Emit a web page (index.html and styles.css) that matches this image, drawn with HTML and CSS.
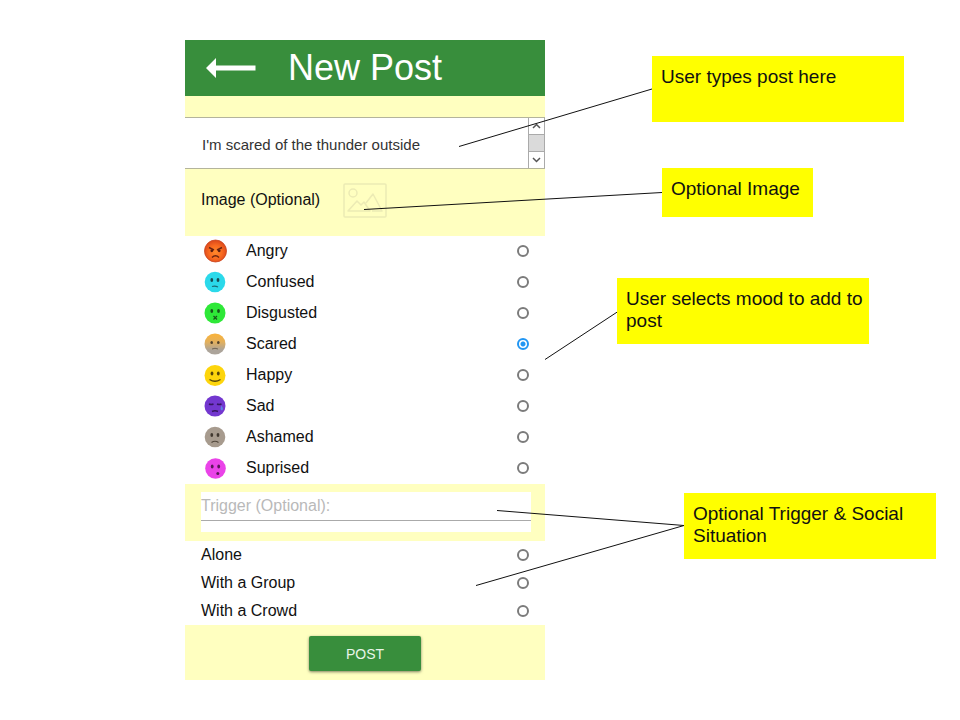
FILE: index.html
```html
<!DOCTYPE html>
<html lang="en">
<head>
<meta charset="utf-8">
<meta name="viewport" content="width=device-width, initial-scale=1">
<title>New Post</title>
<link rel="stylesheet" href="styles.css">
</head>
<body>
<main class="board">
  <form class="phone">
    <header class="topbar">
      <button class="back" type="button" aria-label="Back">
        <svg width="50" height="22" viewBox="0 0 50 22"><path d="M0 11 10 1V8.500H49.500V13.500H10V21Z" fill="#fff"/></svg>
      </button>
      <h1 class="title">New Post</h1>
    </header>

    <div class="message">
      <textarea class="message-text" rows="1" aria-label="Post text">I'm scared of the thunder outside</textarea>
      <div class="scroller">
        <button class="scroll-step" type="button" aria-label="Scroll up"><svg width="9" height="6" viewBox="0 0 9 6"><path d="M1 5 4.500 1.500 8 5"/></svg></button>
        <div class="scroll-thumb"></div>
        <button class="scroll-step" type="button" aria-label="Scroll down"><svg width="9" height="6" viewBox="0 0 9 6"><path d="M1 1 4.500 4.500 8 1"/></svg></button>
      </div>
    </div>

    <div class="image-row">
      <span>Image (Optional)</span>
      <button class="image-pick" type="button" aria-label="Add image">
        <svg width="44" height="35" viewBox="0 0 44 35" fill="none" stroke="#ecebb4" stroke-width="1.500" stroke-linejoin="round"><rect x="1" y="1" width="42" height="33" rx="1"/><circle cx="10" cy="10" r="4"/><path d="M5 28 14 18 18 22 21 19 27 28ZM23 20 30 11 39 28H29"/></svg>
      </button>
    </div>

    <fieldset class="moods" aria-label="Mood">
      <label class="mood">
        <svg class="face" viewBox="0 0 24 24"><defs><radialGradient id="angry" cx=".5" cy=".55" r=".5"><stop offset="0" stop-color="#ff8a2b"/><stop offset=".6" stop-color="#f96a20"/><stop offset="1" stop-color="#e04e1c"/></radialGradient></defs><circle cx="12.500" cy="12" r="11" fill="url(#angry)" stroke="#c9441f" stroke-width=".8"/><path d="M6 8.500 11 11M19 8.500 14 11M9 18.500Q12.500 15 16 18.500" stroke="#6b2410" stroke-width="1.500" fill="none"/><circle cx="8.800" cy="11.800" r="1.400" fill="#5a1e10"/><circle cx="16.200" cy="11.800" r="1.400" fill="#5a1e10"/></svg>
        <span class="mood-name">Angry</span><input class="radio" type="radio" name="mood">
      </label>
      <label class="mood">
        <svg class="face" viewBox="0 0 24 24"><circle cx="12" cy="12" r="10.300" fill="#2bd9ea"/><ellipse cx="8.800" cy="10" rx="1.400" ry="1.900" fill="#174a52"/><ellipse cx="15" cy="10" rx="1.400" ry="1.900" fill="#174a52"/><path d="M9 16.500Q12 15.500 15 17" stroke="#1c6973" stroke-width="1.200" fill="none"/></svg>
        <span class="mood-name">Confused</span><input class="radio" type="radio" name="mood">
      </label>
      <label class="mood">
        <svg class="face" viewBox="0 0 24 24"><circle cx="12" cy="12" r="10.500" fill="#2ee838"/><ellipse cx="8.800" cy="10" rx="1.400" ry="1.900" fill="#17561a"/><ellipse cx="15.500" cy="10" rx="1.400" ry="1.900" fill="#17561a"/><path d="M10.500 15 14 18.500M14 15 10.500 18.500" stroke="#17561a" stroke-width="1.200"/></svg>
        <span class="mood-name">Disgusted</span><input class="radio" type="radio" name="mood">
      </label>
      <label class="mood">
        <svg class="face" viewBox="0 0 24 24"><defs><linearGradient id="scared" x2="0" y2="1"><stop offset=".1" stop-color="#f6b23f"/><stop offset=".4" stop-color="#e3b05c"/><stop offset=".8" stop-color="#aca49a"/></linearGradient></defs><circle cx="12" cy="12" r="10.500" fill="url(#scared)"/><ellipse cx="8.700" cy="10.500" rx="1.300" ry="1.500" fill="#51422c"/><ellipse cx="15.300" cy="10.500" rx="1.300" ry="1.500" fill="#51422c"/><path d="M9 17Q12 15.500 15 17" stroke="#706555" fill="none"/></svg>
        <span class="mood-name">Scared</span><input class="radio" type="radio" name="mood" checked>
      </label>
      <label class="mood">
        <svg class="face" viewBox="0 0 24 24"><circle cx="12" cy="12.500" r="10.500" fill="#fdd50c"/><ellipse cx="9" cy="10.500" rx="1.400" ry="2" fill="#574608"/><ellipse cx="15.300" cy="10.500" rx="1.400" ry="2" fill="#574608"/><path d="M6.500 16.500Q12 20 17.500 16.500" stroke="#574608" stroke-width="1.400" fill="none"/></svg>
        <span class="mood-name">Happy</span><input class="radio" type="radio" name="mood">
      </label>
      <label class="mood">
        <svg class="face" viewBox="0 0 24 24"><circle cx="12" cy="12" r="10.500" fill="#7337cf"/><path d="M6 10Q8 11 10.500 10M14 10Q16 11 18.500 10M9 17.500Q12 16 15 17.500" stroke="#351660" stroke-width="1.400" fill="none"/><path d="M18.500 11.500Q21 15 19 16.500 16.500 16 18.500 11.500" fill="#5b86e4"/></svg>
        <span class="mood-name">Sad</span><input class="radio" type="radio" name="mood">
      </label>
      <label class="mood">
        <svg class="face" viewBox="0 0 24 24"><circle cx="12" cy="12" r="10.300" fill="#a79b8e"/><ellipse cx="8.800" cy="10" rx="1.400" ry="1.900" fill="#41382f"/><ellipse cx="15" cy="10" rx="1.400" ry="1.900" fill="#41382f"/><path d="M8.500 17.500Q12 15 15.500 17.500" stroke="#51473b" stroke-width="1.200" fill="none"/></svg>
        <span class="mood-name">Ashamed</span><input class="radio" type="radio" name="mood">
      </label>
      <label class="mood">
        <svg class="face" viewBox="0 0 24 24"><circle cx="12.500" cy="12.500" r="10.300" fill="#ea43e8"/><ellipse cx="9.200" cy="10.500" rx="1.400" ry="1.900" fill="#5a1959"/><ellipse cx="15.700" cy="10.500" rx="1.400" ry="1.900" fill="#5a1959"/><circle cx="14.800" cy="17.500" r="1.500" fill="#5a1959"/></svg>
        <span class="mood-name">Suprised</span><input class="radio" type="radio" name="mood">
      </label>
    </fieldset>

    <div class="trigger">
      <div class="trigger-box">
        <input class="trigger-input" type="text" placeholder="Trigger (Optional):" aria-label="Trigger (Optional)">
      </div>
    </div>

    <fieldset class="situations" aria-label="Social situation">
      <label class="situation"><span>Alone</span><input class="radio" type="radio" name="situation"></label>
      <label class="situation"><span>With a Group</span><input class="radio" type="radio" name="situation"></label>
      <label class="situation"><span>With a Crowd</span><input class="radio" type="radio" name="situation"></label>
    </fieldset>

    <footer class="actions"><button class="post" type="submit">POST</button></footer>
  </form>

  <svg class="connectors" width="960" height="720" viewBox="0 0 960 720" fill="none" stroke="#111" aria-hidden="true">
    <path d="M459 146.500 652 89M364 209.500 662 192.500M545 359.500 618 311.500M497 510.500 684 525.500 476 585.500"/>
  </svg>
  <p class="note note-text">User types post here</p>
  <p class="note note-image">Optional Image</p>
  <p class="note note-mood">User selects mood to add to post</p>
  <p class="note note-trigger">Optional Trigger &amp; Social Situation</p>
</main>
</body>
</html>
```
FILE: styles.css
```css
* {
  box-sizing: border-box;
}

body {
  margin: 0;
  background: #fff;
  color: #111;
  font: 16px/20px "Liberation Sans", Arial, sans-serif;
}

button,
input,
textarea {
  margin: 0;
  padding: 0;
  border: 0;
  border-radius: 0;
  background: none;
  color: inherit;
  font: inherit;
}

fieldset {
  margin: 0;
  padding: 0;
  border: 0;
  min-width: 0;
  background: #fff;
}

/* The board is a free canvas: one phone mock-up with notes pinned round it. */
.board {
  position: relative;
  min-height: 100vh;
  padding: 40px 0 40px 185px;
}

.phone {
  max-width: 360px;
  background: #ffffc0;
}

.topbar {
  display: flex;
  align-items: center;
  gap: 32px;
  height: 56px;
  padding-left: 21px;
  background: #388e3c;
  color: #fff;
}

.back svg,
.image-pick svg {
  display: block;
}

.title {
  margin: 0;
  font-size: 36px;
  font-weight: 400;
  line-height: 56px;
}

.message {
  display: flex;
  margin-top: 21px;
  border: 1px solid #b4b49c;
  border-width: 1px 0;
  background: #fff;
}

.message-text {
  flex: 1;
  min-width: 0;
  height: 50px;
  padding: 17px 17px 13px;
  color: #333;
  font-size: 15px;
  resize: none;
  overflow: hidden;
}

.scroller {
  display: flex;
  flex-direction: column;
  width: 17px;
  border: 1px solid #aaa;
  border-width: 0 1px;
}

.scroll-step,
.scroll-thumb {
  display: flex;
  flex: 1;
  align-items: center;
  justify-content: center;
}

.scroll-step svg {
  fill: none;
  stroke: #555;
  stroke-width: 1.5;
}

.scroll-thumb {
  border: 1px solid #aaa;
  border-width: 1px 0;
  background: #dadada;
}

.image-row {
  display: flex;
  align-items: center;
  gap: 23px;
  height: 67px;
  padding: 0 16px 5px;
}

.mood {
  display: flex;
  align-items: center;
  height: 31px;
  padding: 0 16px 1px 18px;
}

.face {
  width: 24px;
  height: 24px;
}

.mood-name {
  flex: 1;
  margin-left: 19px;
}

.radio {
  width: 12px;
  height: 12px;
  appearance: none;
  border: 2px solid #7b7b7b;
  border-radius: 50%;
  background: #fff;
}

.radio:checked {
  border-color: #2196f3;
  background: radial-gradient(circle, #2196f3 2px, #fff 3px);
}

.trigger {
  padding: 8px 14px 9px 16px;
}

.trigger-box {
  height: 40px;
  background: #fff;
}

.trigger-input {
  display: block;
  width: 100%;
  height: 29px;
  border-bottom: 1px solid #aaa;
}

.trigger-input::placeholder {
  color: #b9b9b9;
  opacity: 1;
}

.situation {
  display: flex;
  align-items: center;
  justify-content: space-between;
  height: 28px;
  padding: 0 16px 1px;
}

.actions {
  display: flex;
  justify-content: center;
  padding: 11px 0 9px;
}

.post {
  width: 112px;
  height: 35px;
  border-radius: 2px;
  background: #388e3c;
  box-shadow: 0 1px 3px rgba(0, 0, 0, 0.5);
  color: #e8f5e9;
  font-size: 14px;
}

.connectors {
  position: absolute;
  top: 0;
  left: 0;
  pointer-events: none;
}

.note {
  position: absolute;
  width: 252px;
  min-height: 66px;
  margin: 0;
  padding: 10px 4px 12px 9px;
  background: #ff0;
  font-size: 19px;
  line-height: 22px;
}

.note-text {
  top: 56px;
  left: 652px;
}

.note-image {
  top: 168px;
  left: 662px;
  width: 151px;
  min-height: 49px;
}

.note-mood {
  top: 278px;
  left: 617px;
}

.note-trigger {
  top: 493px;
  left: 684px;
}
```
